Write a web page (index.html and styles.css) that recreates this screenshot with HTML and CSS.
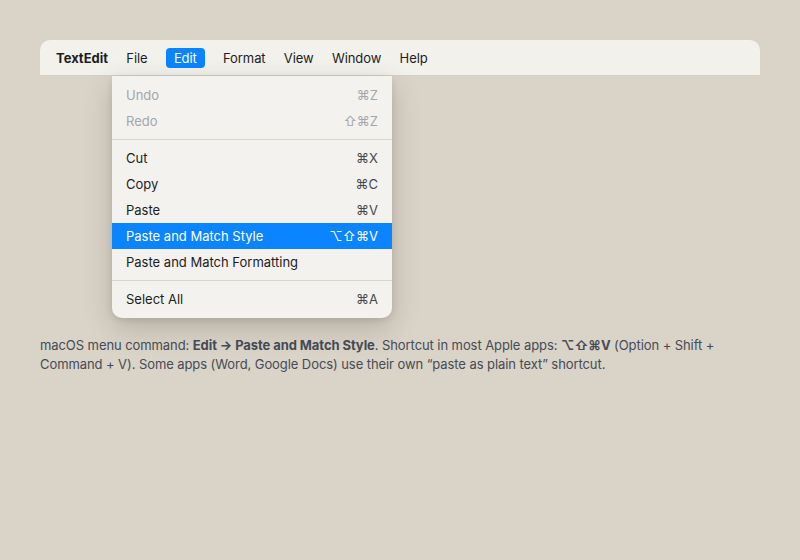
FILE: index.html
```html
<!DOCTYPE html>
<html>
<head>
<meta charset="utf-8">
<link rel="stylesheet" href="styles.css">
</head>
<body>
<div class="stage">
  <div class="bar-wrap">
    <div class="menubar">
      <span class="app">TextEdit</span>
      <span class="mi">File</span>
      <span class="mi active">Edit</span>
      <span class="mi">Format</span>
      <span class="mi">View</span>
      <span class="mi">Window</span>
      <span class="mi">Help</span>
    </div>
    <div class="menu">
      <div class="row disabled"><span>Undo</span><span class="sc">⌘Z</span></div>
      <div class="row disabled"><span>Redo</span><span class="sc">⇧⌘Z</span></div>
      <div class="sep"></div>
      <div class="row"><span>Cut</span><span class="sc">⌘X</span></div>
      <div class="row"><span>Copy</span><span class="sc">⌘C</span></div>
      <div class="row"><span>Paste</span><span class="sc">⌘V</span></div>
      <div class="row sel"><span>Paste and Match Style</span><span class="sc">⌥⇧⌘V</span></div>
      <div class="row"><span>Paste and Match Formatting</span><span class="sc"></span></div>
      <div class="sep"></div>
      <div class="row"><span>Select All</span><span class="sc">⌘A</span></div>
    </div>
  </div>
  <p class="caption">macOS menu command: <b>Edit → Paste and Match Style</b>. Shortcut in most Apple apps: <b>⌥⇧⌘V</b> (Option + Shift + Command + V). Some apps (Word, Google Docs) use their own “paste as plain text” shortcut.</p>
</div>
</body>
</html>
```

FILE: styles.css
```css
html, body {
  margin: 0;
  padding: 0;
  background: #dad3c7;
  font-family: Inter, "Noto Sans", "DejaVu Sans", sans-serif;
  -webkit-font-smoothing: antialiased;
}
.stage {
  padding: 40px 40px 0 40px;
  width: 720px;
}
.bar-wrap {
  position: relative;
  height: 296px;
}
.menubar {
  height: 35px;
  background: #f2f1ec;
  border-radius: 10px 10px 0 0;
  border-bottom: 1px solid #d4cfc6;
  display: flex;
  align-items: center;
  gap: 18.3px;
  padding-left: 16px;
  font-size: 13px;
  letter-spacing: -0.08px;
  color: #1d1d1f;
}
.app {
  font-weight: 700;
  letter-spacing: 0;
}
.mi {
  padding: 2px 0;
  border-radius: 4px;
  line-height: 16px;
}
.mi.active {
  padding: 2px 8px;
  background: #0a84ff;
  color: #fff;
}
.menu {
  position: absolute;
  left: 72px;
  top: 36px;
  width: 280px;
  background: #f3f2ee;
  border-radius: 0 0 10px 10px;
  padding: 6px 0;
  box-shadow: 0 10px 28px rgba(60, 50, 35, 0.22), 0 2px 6px rgba(60, 50, 35, 0.12);
  font-size: 13px;
  color: #1d1d1f;
}
.row {
  height: 26px;
  display: flex;
  align-items: center;
  justify-content: space-between;
  padding: 0 14px;
}
.row .sc {
  color: #48484c;
}
.row.disabled, .row.disabled .sc {
  color: #a3a6ad;
}
.row.sel {
  background: #0a84ff;
  color: #fff;
}
.row.sel .sc {
  color: #fff;
}
.sep {
  height: 1px;
  background: #d9d6cf;
  margin: 5px 0;
}
.caption {
  margin: 0;
  font-size: 13px;
  line-height: 19px;
  letter-spacing: -0.08px;
  color: #454b58;
}
.caption b {
  font-weight: 700;
}
```
